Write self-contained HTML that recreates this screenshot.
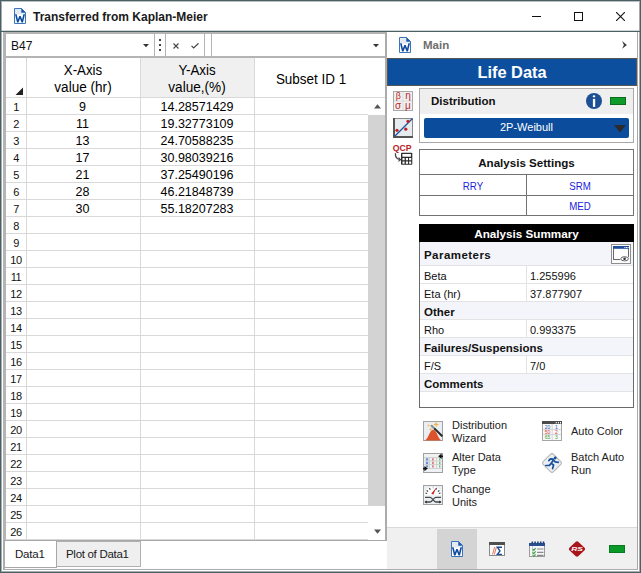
<!DOCTYPE html>
<html><head><meta charset="utf-8">
<style>
*{box-sizing:border-box;margin:0;padding:0}
html,body{width:641px;height:573px;overflow:hidden;background:#fff;font-family:"Liberation Sans",sans-serif;color:#000}
.a{position:absolute}
.t{position:absolute;white-space:nowrap;line-height:1}
.hl{position:absolute;height:1px}
.vl{position:absolute;width:1px}
</style></head><body>
<!-- window frame -->
<div class="a" style="left:0;top:0;width:641px;height:573px;border:1px solid #4b6065"></div>
<div class="a" style="left:1px;top:1px;width:639px;height:571px;border:1px solid #a3acae;border-top-color:#b9c0c2"></div>
<div class="a" style="left:0;top:31px;width:641px;height:1px;background:#4b6065"></div>
<div class="a" style="left:2px;top:30px;width:637px;height:1px;background:#d2d5d6"></div>

<!-- title bar -->
<svg class="a" style="left:14px;top:8px" width="12" height="16" viewBox="0 0 12 16">
<path d="M0.5 0.5H7.5L11.5 4.5V15.5H0.5Z" fill="#fff" stroke="#3b74bb"/>
<path d="M1 1H7.5V5H11V6.5H1Z" fill="#e4eaf2"/>
<path d="M7.5 0.5V4.5H11.5Z" fill="#1a5aab" stroke="#2a67b3" stroke-width="0.6"/>
<path d="M1 6.3H2.6L3.9 11.6L5.3 8H6.7L8.1 11.6L9.4 6.3H11L9 14.4H7.5L6 10.6L4.5 14.4H3Z" fill="#0b4aa0"/>
</svg>
<div class="t" style="left:33px;top:11px;font-size:12px;font-weight:bold;color:#1a1a1a">Transferred from Kaplan-Meier</div>
<div class="a" style="left:532px;top:16px;width:9px;height:1px;background:#111"></div>
<div class="a" style="left:574px;top:12px;width:9px;height:9px;border:1px solid #111"></div>
<svg class="a" style="left:616px;top:12px" width="9" height="9" viewBox="0 0 9 9"><path d="M0 0L9 9M9 0L0 9" stroke="#111" stroke-width="1.1"/></svg>

<!-- left panel frame -->
<div class="a" style="left:3px;top:32px;width:3px;height:509px;background:#b4b4b4"></div>
<div class="a" style="left:6px;top:539px;width:362px;height:1px;background:#d9d9d9"></div>
<div class="a" style="left:3px;top:32px;width:382px;height:2px;background:#b4b4b4"></div>
<div class="a" style="left:3px;top:56px;width:382px;height:2px;background:#b4b4b4"></div>
<div class="a" style="left:385px;top:32px;width:2px;height:509px;background:#acacac"></div>

<!-- toolbar row -->
<div class="t" style="left:11px;top:40px;font-size:12px;color:#111">B47</div>
<svg class="a" style="left:143px;top:44px" width="6" height="4"><path d="M0 0H6L3 3.2Z" fill="#333"/></svg>
<div class="a" style="left:154px;top:34px;width:1px;height:22px;background:#b4b4b4"></div>
<div class="a" style="left:159px;top:39px;width:2px;height:2px;background:#444"></div>
<div class="a" style="left:159px;top:44px;width:2px;height:2px;background:#444"></div>
<div class="a" style="left:159px;top:49px;width:2px;height:2px;background:#444"></div>
<div class="a" style="left:165px;top:34px;width:1px;height:22px;background:#b4b4b4"></div>
<svg class="a" style="left:172.5px;top:43px" width="6" height="6"><path d="M0.5 0.5L5.5 5.5M5.5 0.5L0.5 5.5" stroke="#444" stroke-width="1.1"/></svg>
<svg class="a" style="left:191px;top:42.5px" width="8" height="6"><path d="M0.5 2.8L2.7 5L7.5 0.3" fill="none" stroke="#444" stroke-width="1.2"/></svg>
<div class="a" style="left:204px;top:34px;width:1px;height:22px;background:#b4b4b4"></div>
<div class="a" style="left:211px;top:34px;width:1px;height:22px;background:#b4b4b4"></div>
<svg class="a" style="left:373px;top:44px" width="6" height="4"><path d="M0 0H6L3 3.2Z" fill="#333"/></svg>

<!-- grid -->
<div id="grid" class="a" style="left:6px;top:58px;width:379px;height:481px;overflow:hidden">
<div class="a" style="left:135px;top:0;width:113px;height:39px;background:#f0f0f0"></div>
<div class="hl" style="left:0;top:39px;width:379px;background:#d9d9d9"></div>
<div class="vl" style="left:20px;top:0;height:481px;background:#d9d9d9"></div>
<div class="vl" style="left:134px;top:0;height:481px;background:#d9d9d9"></div>
<div class="vl" style="left:248px;top:0;height:481px;background:#d9d9d9"></div>
<div class="hl" style="left:0;top:56px;width:362px;background:#d9d9d9"></div>
<div class="hl" style="left:0;top:73px;width:362px;background:#d9d9d9"></div>
<div class="hl" style="left:0;top:90px;width:362px;background:#d9d9d9"></div>
<div class="hl" style="left:0;top:107px;width:362px;background:#d9d9d9"></div>
<div class="hl" style="left:0;top:124px;width:362px;background:#d9d9d9"></div>
<div class="hl" style="left:0;top:141px;width:362px;background:#d9d9d9"></div>
<div class="hl" style="left:0;top:158px;width:362px;background:#d9d9d9"></div>
<div class="hl" style="left:0;top:175px;width:362px;background:#d9d9d9"></div>
<div class="hl" style="left:0;top:192px;width:362px;background:#d9d9d9"></div>
<div class="hl" style="left:0;top:209px;width:362px;background:#d9d9d9"></div>
<div class="hl" style="left:0;top:226px;width:362px;background:#d9d9d9"></div>
<div class="hl" style="left:0;top:243px;width:362px;background:#d9d9d9"></div>
<div class="hl" style="left:0;top:260px;width:362px;background:#d9d9d9"></div>
<div class="hl" style="left:0;top:277px;width:362px;background:#d9d9d9"></div>
<div class="hl" style="left:0;top:294px;width:362px;background:#d9d9d9"></div>
<div class="hl" style="left:0;top:311px;width:362px;background:#d9d9d9"></div>
<div class="hl" style="left:0;top:328px;width:362px;background:#d9d9d9"></div>
<div class="hl" style="left:0;top:345px;width:362px;background:#d9d9d9"></div>
<div class="hl" style="left:0;top:362px;width:362px;background:#d9d9d9"></div>
<div class="hl" style="left:0;top:379px;width:362px;background:#d9d9d9"></div>
<div class="hl" style="left:0;top:396px;width:362px;background:#d9d9d9"></div>
<div class="hl" style="left:0;top:413px;width:362px;background:#d9d9d9"></div>
<div class="hl" style="left:0;top:430px;width:362px;background:#d9d9d9"></div>
<div class="hl" style="left:0;top:447px;width:362px;background:#d9d9d9"></div>
<div class="hl" style="left:0;top:464px;width:362px;background:#d9d9d9"></div>
<div class="hl" style="left:0;top:481px;width:379px;background:#d9d9d9"></div>
<svg class="a" style="left:9px;top:29px" width="8" height="8"><path d="M8 0.5V8H0.5Z" fill="#222"/></svg>
<div class="t" style="left:-23.5px;width:200px;text-align:center;top:5px;font-size:14px;transform:scaleX(0.95);">X-Axis</div>
<div class="t" style="left:-23.5px;width:200px;text-align:center;top:21.5px;font-size:14px;transform:scaleX(0.97);">value (hr)</div>
<div class="t" style="left:91px;width:200px;text-align:center;top:5px;font-size:14px;transform:scaleX(0.95);">Y-Axis</div>
<div class="t" style="left:91px;width:200px;text-align:center;top:21.5px;font-size:14px;transform:scaleX(0.97);">value,(%)</div>
<div class="t" style="left:204.5px;width:200px;text-align:center;top:13.5px;font-size:14px;transform:scaleX(0.96);">Subset ID 1</div>
<div class="t" style="left:0;width:20px;text-align:center;top:44px;font-size:11px;color:#111;letter-spacing:-0.4px">1</div>
<div class="t" style="left:-23.5px;width:200px;text-align:center;top:43px;font-size:12.5px;">9</div>
<div class="t" style="left:91px;width:200px;text-align:center;top:43px;font-size:12.5px;">14.28571429</div>
<div class="t" style="left:0;width:20px;text-align:center;top:61px;font-size:11px;color:#111;letter-spacing:-0.4px">2</div>
<div class="t" style="left:-23.5px;width:200px;text-align:center;top:60px;font-size:12.5px;">11</div>
<div class="t" style="left:91px;width:200px;text-align:center;top:60px;font-size:12.5px;">19.32773109</div>
<div class="t" style="left:0;width:20px;text-align:center;top:78px;font-size:11px;color:#111;letter-spacing:-0.4px">3</div>
<div class="t" style="left:-23.5px;width:200px;text-align:center;top:77px;font-size:12.5px;">13</div>
<div class="t" style="left:91px;width:200px;text-align:center;top:77px;font-size:12.5px;">24.70588235</div>
<div class="t" style="left:0;width:20px;text-align:center;top:95px;font-size:11px;color:#111;letter-spacing:-0.4px">4</div>
<div class="t" style="left:-23.5px;width:200px;text-align:center;top:94px;font-size:12.5px;">17</div>
<div class="t" style="left:91px;width:200px;text-align:center;top:94px;font-size:12.5px;">30.98039216</div>
<div class="t" style="left:0;width:20px;text-align:center;top:112px;font-size:11px;color:#111;letter-spacing:-0.4px">5</div>
<div class="t" style="left:-23.5px;width:200px;text-align:center;top:111px;font-size:12.5px;">21</div>
<div class="t" style="left:91px;width:200px;text-align:center;top:111px;font-size:12.5px;">37.25490196</div>
<div class="t" style="left:0;width:20px;text-align:center;top:129px;font-size:11px;color:#111;letter-spacing:-0.4px">6</div>
<div class="t" style="left:-23.5px;width:200px;text-align:center;top:128px;font-size:12.5px;">28</div>
<div class="t" style="left:91px;width:200px;text-align:center;top:128px;font-size:12.5px;">46.21848739</div>
<div class="t" style="left:0;width:20px;text-align:center;top:146px;font-size:11px;color:#111;letter-spacing:-0.4px">7</div>
<div class="t" style="left:-23.5px;width:200px;text-align:center;top:145px;font-size:12.5px;">30</div>
<div class="t" style="left:91px;width:200px;text-align:center;top:145px;font-size:12.5px;">55.18207283</div>
<div class="t" style="left:0;width:20px;text-align:center;top:163px;font-size:11px;color:#111;letter-spacing:-0.4px">8</div>
<div class="t" style="left:0;width:20px;text-align:center;top:180px;font-size:11px;color:#111;letter-spacing:-0.4px">9</div>
<div class="t" style="left:0;width:20px;text-align:center;top:197px;font-size:11px;color:#111;letter-spacing:-0.4px">10</div>
<div class="t" style="left:0;width:20px;text-align:center;top:214px;font-size:11px;color:#111;letter-spacing:-0.4px">11</div>
<div class="t" style="left:0;width:20px;text-align:center;top:231px;font-size:11px;color:#111;letter-spacing:-0.4px">12</div>
<div class="t" style="left:0;width:20px;text-align:center;top:248px;font-size:11px;color:#111;letter-spacing:-0.4px">13</div>
<div class="t" style="left:0;width:20px;text-align:center;top:265px;font-size:11px;color:#111;letter-spacing:-0.4px">14</div>
<div class="t" style="left:0;width:20px;text-align:center;top:282px;font-size:11px;color:#111;letter-spacing:-0.4px">15</div>
<div class="t" style="left:0;width:20px;text-align:center;top:299px;font-size:11px;color:#111;letter-spacing:-0.4px">16</div>
<div class="t" style="left:0;width:20px;text-align:center;top:316px;font-size:11px;color:#111;letter-spacing:-0.4px">17</div>
<div class="t" style="left:0;width:20px;text-align:center;top:333px;font-size:11px;color:#111;letter-spacing:-0.4px">18</div>
<div class="t" style="left:0;width:20px;text-align:center;top:350px;font-size:11px;color:#111;letter-spacing:-0.4px">19</div>
<div class="t" style="left:0;width:20px;text-align:center;top:367px;font-size:11px;color:#111;letter-spacing:-0.4px">20</div>
<div class="t" style="left:0;width:20px;text-align:center;top:384px;font-size:11px;color:#111;letter-spacing:-0.4px">21</div>
<div class="t" style="left:0;width:20px;text-align:center;top:401px;font-size:11px;color:#111;letter-spacing:-0.4px">22</div>
<div class="t" style="left:0;width:20px;text-align:center;top:418px;font-size:11px;color:#111;letter-spacing:-0.4px">23</div>
<div class="t" style="left:0;width:20px;text-align:center;top:435px;font-size:11px;color:#111;letter-spacing:-0.4px">24</div>
<div class="t" style="left:0;width:20px;text-align:center;top:452px;font-size:11px;color:#111;letter-spacing:-0.4px">25</div>
<div class="t" style="left:0;width:20px;text-align:center;top:469px;font-size:11px;color:#111;letter-spacing:-0.4px">26</div>
<div class="a" style="left:362px;top:57px;width:17px;height:391px;background:#d3d3d3"></div>
<svg class="a" style="left:367.5px;top:46px" width="7" height="5"><path d="M3.5 0.3L7 4.5H0Z" fill="#555"/></svg>
<svg class="a" style="left:367.5px;top:471px" width="7" height="5"><path d="M0 0.5H7L3.5 4.7Z" fill="#555"/></svg>
</div>
<div class="a" style="left:3px;top:540px;width:384px;height:1px;background:#a8a8a8"></div>

<!-- tabs -->
<div class="a" style="left:3px;top:541px;width:2px;height:28px;background:#acacac"></div>
<div class="a" style="left:5px;top:541px;width:52px;height:27px;background:#fff;border-right:1px solid #a8a8a8;border-bottom:1px solid #a8a8a8"></div>
<div class="t" style="left:15px;top:549px;font-size:11.5px;color:#1a1a1a;letter-spacing:-0.2px">Data1</div>
<div class="a" style="left:57px;top:541px;width:84px;height:26px;background:#efefef;border:1px solid #b0b0b0;border-left:0"></div>
<div class="t" style="left:66px;top:549px;font-size:11.5px;color:#1a1a1a;letter-spacing:-0.3px">Plot of Data1</div>
<div class="a" style="left:3px;top:569px;width:635px;height:1px;background:#acacac"></div>

<!-- right panel -->
<div id="right"></div>
<!-- main row -->
<svg class="a" style="left:399px;top:37px" width="12" height="16" viewBox="0 0 12 16">
<path d="M0.5 0.5H7.5L11.5 4.5V15.5H0.5Z" fill="#fff" stroke="#3b74bb"/>
<path d="M1 1H7.5V5H11V6.5H1Z" fill="#e4eaf2"/>
<path d="M7.5 0.5V4.5H11.5Z" fill="#1a5aab" stroke="#2a67b3" stroke-width="0.6"/>
<path d="M1 6.3H2.6L3.9 11.6L5.3 8H6.7L8.1 11.6L9.4 6.3H11L9 14.4H7.5L6 10.6L4.5 14.4H3Z" fill="#0b4aa0"/>
</svg>
<div class="t" style="left:423px;top:40px;font-size:11.5px;font-weight:bold;color:#6e6e6e">Main</div>
<svg class="a" style="left:621px;top:40px" width="7" height="10"><path d="M1.1 1L5.9 5.1L1.1 8.8L2.9 5.1Z" fill="#3c3c3c"/></svg>
<div class="a" style="left:637px;top:32px;width:1px;height:538px;background:#a8a8a8"></div>

<!-- blue bar -->
<div class="a" style="left:387px;top:58px;width:250px;height:28px;background:#0b4f9e;border:1px solid #555"></div>
<div class="t" style="left:387px;width:250px;text-align:center;top:64px;font-size:16.4px;font-weight:bold;color:#fff">Life Data</div>

<!-- icon strip -->
<svg class="a" style="left:393px;top:91px" width="20" height="20" viewBox="0 0 20 20">
<rect x="0.5" y="0.5" width="19" height="19" fill="#f0f0f0" stroke="#a9a9a9"/>
<path d="M10 1V19M1 10H19" stroke="#dcdcdc"/>
<text x="5.3" y="8" font-size="8.8" fill="#b9282c" text-anchor="middle" font-family="Liberation Sans">β</text>
<text x="15" y="8" font-size="10" fill="#b9282c" text-anchor="middle" font-family="Liberation Sans">η</text>
<text x="5" y="18" font-size="10" fill="#b9282c" text-anchor="middle" font-family="Liberation Sans">σ</text>
<text x="15" y="18" font-size="10" fill="#b9282c" text-anchor="middle" font-family="Liberation Sans">μ</text>
</svg>
<svg class="a" style="left:393px;top:118px" width="20" height="20" viewBox="0 0 20 20">
<rect x="0" y="0" width="20" height="20" fill="#e6ebf0"/>
<path d="M0.5 0.5H19.5V19.5" fill="none" stroke="#8a8a8a"/>
<path d="M1 0V19H20" fill="none" stroke="#555" stroke-width="2"/>
<path d="M1.5 18.5L19.5 0.5" stroke="#1a52a0" stroke-width="1.2"/>
<circle cx="4" cy="12.3" r="1.6" fill="#bf2224"/><circle cx="12.8" cy="11.2" r="1.6" fill="#bf2224"/><circle cx="15" cy="3.3" r="1.6" fill="#bf2224"/>
</svg>
<svg class="a" style="left:392px;top:144px" width="22" height="22" viewBox="0 0 22 22">
<text x="10.1" y="7.0" font-size="8.4" font-weight="bold" fill="#b82228" text-anchor="middle" font-family="Liberation Sans" transform="translate(10 0) scale(1.04 1) translate(-10 0)">QCP</text>
<path d="M3.4 9.3Q3 14.6 7.8 15.6" fill="none" stroke="#444" stroke-width="1.2"/><path d="M6.6 13.6L8.6 15.7L6.4 17.4" fill="none" stroke="#444" stroke-width="1.1"/>
<rect x="9" y="8.7" width="11.3" height="12" rx="0.8" fill="#2e2e2e"/>
<rect x="10.4" y="10" width="8.5" height="2.7" fill="#fff"/>
<path d="M10.5 14.1h2.1v2.1h-2.1zM13.9 14.1h2.1v2.1h-2.1zM17.1 14.1h2.1v2.1h-2.1zM10.5 17.5h2.1v2.2h-2.1zM13.9 17.5h2.1v2.2h-2.1zM17.1 17.5h2.1v2.2h-2.1z" fill="#fff"/>
</svg>

<!-- distribution box -->
<div class="a" style="left:419px;top:88px;width:215px;height:55px;border:1px solid #a9a9a9;background:#fff"></div>
<div class="a" style="left:420px;top:89px;width:213px;height:25px;background:#efefef"></div>
<div class="t" style="left:431px;top:96px;font-size:11.5px;font-weight:bold;color:#111">Distribution</div>
<svg class="a" style="left:586px;top:93px" width="16" height="16" viewBox="0 0 16 16">
<circle cx="8" cy="8" r="8" fill="#1d4f95"/>
<ellipse cx="8" cy="3.3" rx="1.3" ry="1.1" fill="#fff"/>
<rect x="6.9" y="5.9" width="2.3" height="8" fill="#fff"/>
</svg>
<div class="a" style="left:610px;top:97px;width:16px;height:8px;background:#0d9b2b;border:1px solid #0a6e1e"></div>
<div class="a" style="left:424px;top:118px;width:205px;height:20px;background:#0b4c9c;border-radius:2px"></div>
<div class="t" style="left:424px;width:205px;text-align:center;top:122px;font-size:11px;color:#fff">2P-Weibull</div>
<svg class="a" style="left:614px;top:125px" width="12" height="8"><path d="M0 0H12L6 7.5Z" fill="#2b2b2b"/></svg>

<!-- analysis settings -->
<div class="a" style="left:419px;top:149px;width:215px;height:67px;border:1px solid #727272"></div>
<div class="hl" style="left:419px;top:174px;width:215px;background:#727272"></div>
<div class="hl" style="left:419px;top:195px;width:215px;background:#727272"></div>
<div class="vl" style="left:526px;top:174px;height:42px;background:#727272"></div>
<div class="t" style="left:419px;width:215px;text-align:center;top:157px;font-size:11.6px;font-weight:bold;color:#111">Analysis Settings</div>
<div class="t" style="left:420px;width:106px;text-align:center;top:181px;font-size:11px;color:#1c1cdc;transform:scaleX(0.88)">RRY</div>
<div class="t" style="left:527px;width:106px;text-align:center;top:181px;font-size:11px;color:#1c1cdc;transform:scaleX(0.88)">SRM</div>
<div class="t" style="left:527px;width:106px;text-align:center;top:201px;font-size:11px;color:#1c1cdc;transform:scaleX(0.88)">MED</div>

<!-- analysis summary -->
<div class="a" style="left:419px;top:224px;width:215px;height:184px;border:1px solid #6a6a6a;border-top:0"></div>
<div class="a" style="left:419px;top:224px;width:215px;height:18px;background:#000"></div>
<div class="t" style="left:419px;width:215px;text-align:center;top:228px;font-size:11.7px;font-weight:bold;color:#fff">Analysis Summary</div>
<div class="a" style="left:420px;top:242px;width:213px;height:23px;background:#f4f5fa"></div>
<div class="a" style="left:420px;top:302px;width:213px;height:17px;background:#f4f5fa"></div>
<div class="a" style="left:420px;top:338px;width:213px;height:17px;background:#f4f5fa"></div>
<div class="a" style="left:420px;top:374px;width:213px;height:17px;background:#f4f5fa"></div>
<div class="hl" style="left:420px;top:265px;width:213px;background:#e3e3e3"></div>
<div class="hl" style="left:420px;top:283px;width:213px;background:#e3e3e3"></div>
<div class="hl" style="left:420px;top:301px;width:213px;background:#e3e3e3"></div>
<div class="hl" style="left:420px;top:319px;width:213px;background:#e3e3e3"></div>
<div class="hl" style="left:420px;top:337px;width:213px;background:#e3e3e3"></div>
<div class="hl" style="left:420px;top:355px;width:213px;background:#e3e3e3"></div>
<div class="hl" style="left:420px;top:373px;width:213px;background:#e3e3e3"></div>
<div class="hl" style="left:420px;top:391px;width:213px;background:#e3e3e3"></div>
<div class="vl" style="left:526px;top:266px;height:35px;background:#e3e3e3"></div>
<div class="vl" style="left:526px;top:320px;height:17px;background:#e3e3e3"></div>
<div class="vl" style="left:526px;top:356px;height:17px;background:#e3e3e3"></div>
<div class="t" style="left:424px;top:250px;font-size:11.5px;font-weight:bold;color:#111;letter-spacing:0.45px">Parameters</div>
<svg class="a" style="left:611px;top:244px" width="20" height="20" viewBox="0 0 20 20">
<rect x="0.5" y="0.5" width="19" height="19" fill="#fafafa" stroke="#8e8e8e"/>
<rect x="2.5" y="2.5" width="15" height="13" fill="#fff" stroke="#6a6a6a"/>
<rect x="2" y="2" width="16" height="2.8" fill="#1f4f9a"/>
<path d="M13.4 2.9h1v1h-1zM15 2.9h1v1h-1zM16.6 2.9h1v1h-1z" fill="#fff"/>
<ellipse cx="13.6" cy="14.8" rx="4.6" ry="2.8" fill="#fff"/>
<ellipse cx="13.6" cy="14.8" rx="3.8" ry="2.1" fill="#fff" stroke="#555" stroke-width="0.9"/>
<circle cx="13.6" cy="14.8" r="1.3" fill="#333"/>
</svg>
<div class="t" style="left:424px;top:271px;font-size:11px;color:#111">Beta</div>
<div class="t" style="left:530px;top:271px;font-size:11px;color:#111">1.255996</div>
<div class="t" style="left:424px;top:289px;font-size:11px;color:#111">Eta (hr)</div>
<div class="t" style="left:530px;top:289px;font-size:11px;color:#111">37.877907</div>
<div class="t" style="left:424px;top:307px;font-size:11.5px;font-weight:bold;color:#111">Other</div>
<div class="t" style="left:424px;top:325px;font-size:11px;color:#111">Rho</div>
<div class="t" style="left:530px;top:325px;font-size:11px;color:#111">0.993375</div>
<div class="t" style="left:424px;top:343px;font-size:11.5px;font-weight:bold;color:#111">Failures/Suspensions</div>
<div class="t" style="left:424px;top:361px;font-size:11px;color:#111">F/S</div>
<div class="t" style="left:530px;top:361px;font-size:11px;color:#111">7/0</div>
<div class="t" style="left:424px;top:379px;font-size:11.5px;font-weight:bold;color:#111">Comments</div>

<!-- buttons -->
<svg class="a" style="left:423px;top:421px" width="20" height="20" viewBox="0 0 20 20">
<rect x="0.5" y="0.5" width="19" height="19" fill="#e9eef3" stroke="#a3a3a3"/>
<path d="M1.2 19.5C5.2 19.5 6.2 8.7 10.2 8.7C14.2 8.7 15.2 19.5 19 19.5Z" fill="#dc532b"/>
<path d="M13.1 0.3999999999999999L13.9 2.5999999999999996L16.1 3.4L13.9 4.2L13.1 6.4L12.299999999999999 4.2L10.1 3.4L12.299999999999999 2.5999999999999996Z" fill="#f2b74c"/><path d="M5.6 2.4000000000000004L6.1 3.9000000000000004L7.6 4.4L6.1 4.9L5.6 6.4L5.1 4.9L3.5999999999999996 4.4L5.1 3.9000000000000004Z" fill="#f6c77a"/><path d="M7.8 6.1000000000000005L8.4 7.700000000000001L10.0 8.3L8.4 8.9L7.8 10.5L7.2 8.9L5.6 8.3L7.2 7.700000000000001Z" fill="#f4c06a"/>
<path d="M11.6 7.6L18.8 14.8" stroke="#262626" stroke-width="2" stroke-linecap="round"/>
<path d="M8.6 4.8L10.6 6.8" stroke="#8c8c8c" stroke-width="2" stroke-linecap="round"/>
</svg>
<div class="t" style="left:452px;top:419px;font-size:11px;color:#222;line-height:13px">Distribution<br>Wizard</div>
<svg class="a" style="left:423px;top:453px" width="20" height="20" viewBox="0 0 20 20">
<rect x="0.5" y="0.5" width="19" height="19" fill="#eef2f5" stroke="#a0a0a0"/>
<path d="M1 4.5H19M1 8H19M1 11.5H19M1 15.5H19M6.5 4.5V15.5M13.5 4.5V15.5" stroke="#d2d2d2"/>
<path d="M2.8 5.2h2.4v2.2h-2.4zM2.8 8.7h2.4v2.2h-2.4zM2.8 12.2h2.4v2.2h-2.4z" fill="#6a93cc"/>
<path d="M9 5.2h1.8v2.2h-1.8zM9 8.7h1.8v2.2h-1.8zM9 12.2h1.8v2.2h-1.8z" fill="#e08080"/>
<path d="M16 5.2h1.4v2.2h-1.4zM16 8.7h1.4v2.2h-1.4zM16 12.2h1.4v2.2h-1.4z" fill="#7cbf7c"/>
<path d="M15.2 3.3L18.6 0.6V6Z" fill="#111"/><path d="M17.5 2.5H20V4.1H17.5Z" fill="#111"/>
<path d="M4.8 15.6L1.4 12.9V18.3Z" fill="#111"/><path d="M0 14.8H2.5V16.4H0Z" fill="#111"/>
</svg>
<div class="t" style="left:452px;top:451px;font-size:11px;color:#222;line-height:13px">Alter Data<br>Type</div>
<svg class="a" style="left:423px;top:485px" width="20" height="20" viewBox="0 0 20 20">
<rect x="0.5" y="0.5" width="19" height="19" fill="#e9eff3" stroke="#a0a0a0"/>
<path d="M1.2 10.2A8.8 8.8 0 0 1 18.8 10.2Z" fill="#fff"/>
<path d="M4.20 8.45L2.47 7.98M5.09 6.56L3.61 5.53M7.28 4.65L6.46 3.05M12.72 4.65L13.54 3.05M14.91 6.56L16.39 5.53M15.80 8.45L17.53 7.98" stroke="#3a3a3a" stroke-width="1.1"/>
<path d="M10.2 1.6V3.4" stroke="#bbb" stroke-width="1"/>
<path d="M8.2 8.8L10.4 9.6L13.2 2.8Z" fill="#c81e1e"/>
<path d="M2 12.3H7.2C9.4 12.3 10.6 17 12.8 17H18M2 17H7.2C9.4 17 10.6 12.3 12.8 12.3H18" fill="none" stroke="#4a4a4a" stroke-width="1.3"/>
<path d="M1.3 17L4 15.4V18.6Z M18.7 17L16 15.4V18.6Z" fill="#3a3a3a"/>
</svg>
<div class="t" style="left:452px;top:483px;font-size:11px;color:#222;line-height:13px">Change<br>Units</div>
<svg class="a" style="left:542px;top:421px" width="20" height="20" viewBox="0 0 20 20">
<rect x="0.5" y="0.5" width="19" height="19" fill="#f8f8f8" stroke="#a5a5a5"/>
<rect x="0" y="0" width="20" height="3" fill="#4a4a4a"/><path d="M13.7 1h1v1.5h-1zM15.9 1h1v1.5h-1zM18 1h1v1.5h-1z" fill="#fff"/>
<path d="M10.2 3V19M1 8.5H19M1 13.5H19" stroke="#d6d6d6"/>
<text x="5.5" y="8" font-size="5" fill="#2f5fb0" text-anchor="middle" font-family="Liberation Sans">20</text><text x="14.5" y="8" font-size="5" fill="#2f5fb0" text-anchor="middle" font-family="Liberation Sans">1</text>
<text x="5.5" y="13" font-size="5" fill="#d04040" text-anchor="middle" font-family="Liberation Sans">50</text><text x="14.5" y="13" font-size="5" fill="#d04040" text-anchor="middle" font-family="Liberation Sans">2</text>
<text x="5.5" y="18" font-size="5" fill="#40a040" text-anchor="middle" font-family="Liberation Sans">65</text><text x="14.5" y="18" font-size="5" fill="#40a040" text-anchor="middle" font-family="Liberation Sans">3</text>
</svg>
<div class="t" style="left:571px;top:426px;font-size:11px;color:#222">Auto Color</div>
<svg class="a" style="left:542px;top:453px" width="20" height="20" viewBox="0 0 20 20">
<rect x="2.8" y="2.8" width="14.4" height="14.4" rx="2.2" transform="rotate(45 10 10)" fill="#eaeff3" stroke="#b3b3b3"/>
<circle cx="13.2" cy="5" r="1.4" fill="#1a4f9c"/>
<path d="M11.6 6.8L9.2 10.2M11.2 6.1L8.4 5.9L6.8 7.6M11.6 7.3L13.2 8.9L16.3 9.3M9.2 10.2L7.4 12.4L3.8 12.5M9.2 10.2L11.6 12L10.6 15.6" fill="none" stroke="#1a4f9c" stroke-width="1.7" stroke-linecap="round" stroke-linejoin="round"/>
</svg>
<div class="t" style="left:571px;top:451px;font-size:11px;color:#222;line-height:13px">Batch Auto<br>Run</div>

<!-- bottom toolbar -->
<div class="a" style="left:387px;top:527px;width:250px;height:1px;background:#d9d9d9"></div>
<div class="a" style="left:387px;top:528px;width:250px;height:41px;background:#f0f0f0"></div>
<div class="a" style="left:437px;top:529px;width:40px;height:40px;background:#d4d4d4"></div>
<svg class="a" style="left:451px;top:541px" width="12" height="16" viewBox="0 0 12 16">
<path d="M0.5 0.5H7.5L11.5 4.5V15.5H0.5Z" fill="#fff" stroke="#3b74bb"/>
<path d="M1 1H7.5V5H11V6.5H1Z" fill="#e4eaf2"/>
<path d="M7.5 0.5V4.5H11.5Z" fill="#1a5aab" stroke="#2a67b3" stroke-width="0.6"/>
<path d="M1 6.3H2.6L3.9 11.6L5.3 8H6.7L8.1 11.6L9.4 6.3H11L9 14.4H7.5L6 10.6L4.5 14.4H3Z" fill="#0b4aa0"/>
</svg>
<svg class="a" style="left:489px;top:542px" width="16" height="14" viewBox="0 0 16 14">
<rect x="0.5" y="0.5" width="15" height="13" fill="#fff" stroke="#8a8a8a"/>
<rect x="0" y="0" width="16" height="3" fill="#505050"/>
<path d="M3.6 12.5L5.6 5M5.4 12.5L7.4 5" stroke="#e0643f" stroke-width="0.9"/>
<path d="M13 5.2H8.4L11 9L8.4 12.4H13" fill="none" stroke="#1f4f9a" stroke-width="1.4"/>
</svg>
<svg class="a" style="left:529px;top:541px" width="16" height="16" viewBox="0 0 16 16">
<rect x="0.5" y="2.5" width="15" height="13" fill="#f4f6f8" stroke="#9a9a9a"/>
<rect x="0" y="2" width="16" height="3" fill="#2a4f8f"/>
<path d="M2.5 0.5h1.6v2h-1.6zM5.3 0.5h1.6v2h-1.6zM8.1 0.5h1.6v2h-1.6zM10.9 0.5h1.6v2h-1.6zM13.7 0.5h1.6v2h-1.6z" fill="#1f3f73"/>
<path d="M3.5 5V15.5" stroke="#c8ced6"/>
<path d="M3.6 8.2L4.8 9.4L6.6 7.2M3.6 11.4L4.8 12.6L6.6 10.4M3.6 14.3L4.8 15.3L6.6 13.3" fill="none" stroke="#3aa03a" stroke-width="1.1"/>
<path d="M8 8H14.5M8 11.3H14.5M8 14.4H14.5" stroke="#8a8a8a" stroke-width="1.2"/>
</svg>
<svg class="a" style="left:568px;top:541px" width="18" height="16" viewBox="0 0 18 16">
<rect x="3.1" y="2.1" width="11.8" height="11.8" rx="2" transform="translate(9 8) scale(1.06 1) rotate(45) translate(-9 -8)" fill="#a8161c"/>
<text x="9" y="10.3" font-size="6.2" font-weight="bold" font-style="italic" fill="#fff" text-anchor="middle" font-family="Liberation Sans" transform="translate(9 0) scale(1.35 1) translate(-9 0)">RS</text>
</svg>
<div class="a" style="left:609px;top:545px;width:16px;height:8px;background:#0a9a2a;border:1px solid #0a7a22"></div>

</body></html>
